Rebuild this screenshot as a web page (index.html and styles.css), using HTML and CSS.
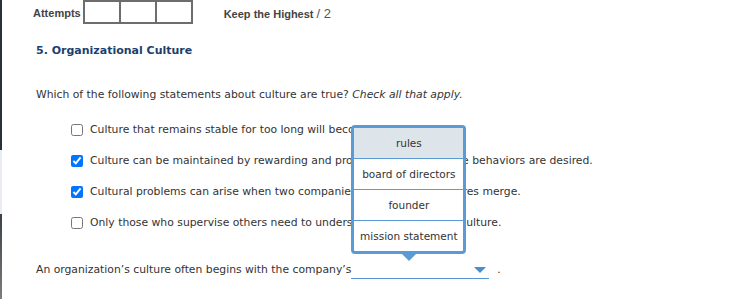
FILE: index.html
```html
<!DOCTYPE html>
<html lang="en">
<head>
    <meta charset="UTF-8">
    <meta name="viewport" content="width=device-width, initial-scale=1.0">
    <title>Organizational Culture</title>
    <link rel="stylesheet" href="styles.css">
</head>
<body>
    <div class="frame">
        <div class="edge"></div>
        <main class="content">
            <div class="attempts">
                <span class="attempts-label">Attempts</span>
                <div class="boxes">
                    <span></span><span></span><span></span>
                </div>
                <span class="keep">Keep the Highest <span class="total">/ 2</span></span>
            </div>

            <h2>5. Organizational Culture</h2>

            <p class="prompt">Which of the following statements about culture are true? <em>Check all that apply.</em></p>

            <ul class="choices">
                <li><input type="checkbox" id="c1"><label for="c1">Culture that remains stable for too long will become rigid.</label></li>
                <li><input type="checkbox" id="c2" checked><label for="c2">Culture can be maintained by rewarding and promoting people whose behaviors are desired.</label></li>
                <li><input type="checkbox" id="c3" checked><label for="c3">Cultural problems can arise when two companies with different cultures merge.</label></li>
                <li><input type="checkbox" id="c4"><label for="c4">Only those who supervise others need to understand the workplace culture.</label></li>
            </ul>

            <p class="fill">An organization’s culture often begins with the company’s
                <span class="select">
                    <span class="arrow"></span>
                    <span class="menu">
                        <span class="option active">rules</span>
                        <span class="option">board of directors</span>
                        <span class="option">founder</span>
                        <span class="option">mission statement</span>
                    </span>
                </span>
                <span class="dot">.</span>
            </p>
        </main>
    </div>
</body>
</html>
```

FILE: styles.css
```css
body {
    margin: 0;
    background: #ffffff;
    font-family: "DejaVu Sans", Verdana, sans-serif;
    color: #333333;
}
.frame {
    display: flex;
    height: 299px;
    overflow: hidden;
}
.edge {
    width: 2px;
    flex-shrink: 0;
    background: linear-gradient(180deg, #263238 0, #263238 150px, #e9edf2 150px, #e9edf2 214px, #3b4045 214px, #7b7e80 299px);
}
.content {
    flex: 1;
    padding-left: 34px;
}
.attempts {
    display: flex;
    align-items: center;
    height: 26px;
    margin-left: -3px;
    font-family: "Liberation Sans", Arial, sans-serif;
}
.attempts-label {
    font-size: 11px;
    font-weight: bold;
    color: #444;
    margin-right: 2px;
}
.boxes {
    display: flex;
    margin-top: -2px;
}
.boxes span {
    width: 34px;
    height: 20px;
    border: 2px solid #6d6d6d;
    margin-right: -2px;
}
.keep {
    margin-left: 33px;
    font-size: 11px;
    font-weight: bold;
    color: #444;
}
.total {
    font-weight: normal;
    font-size: 13px;
    color: #555;
}
h2 {
    margin: 18px 0 0;
    font-size: 11px;
    font-weight: bold;
    color: #1d3f6e;
}
.prompt {
    margin: 31px 0 0;
    font-size: 10.8px;
}
.choices {
    list-style: none;
    margin: 13px 0 0;
    padding: 0 0 0 34px;
}
.choices li {
    display: flex;
    align-items: center;
    height: 31px;
    font-size: 10.8px;
    white-space: nowrap;
}
.choices input {
    margin: 0 7px 0 1px;
    width: 12px;
    height: 12px;
}
.fill {
    margin: 22px 0 0;
    font-size: 10.8px;
    display: flex;
    align-items: center;
}
.select {
    position: relative;
    display: inline-block;
    width: 138px;
    height: 18px;
    margin-left: 0;
    border-bottom: 1px solid #5a95cf;
}
.arrow {
    position: absolute;
    right: 3px;
    top: 7px;
    border-left: 6px solid transparent;
    border-right: 6px solid transparent;
    border-top: 6px solid #4a8ccc;
}
.dot {
    margin-left: 8px;
}
.menu {
    position: absolute;
    left: 0;
    bottom: 24px;
    width: 109px;
    display: flex;
    flex-direction: column;
    background: #fff;
    border: 3px solid #5b9bd5;
    border-radius: 4px;
}
.menu::after {
    content: "";
    position: absolute;
    left: 50%;
    bottom: -10px;
    margin-left: -7px;
    border-left: 7px solid transparent;
    border-right: 7px solid transparent;
    border-top: 7px solid #5b9bd5;
}
.option {
    height: 30px;
    line-height: 30px;
    text-align: center;
    font-size: 10.5px;
    border-top: 1px solid #5b9bd5;
}
.option:first-child {
    border-top: none;
}
.option.active {
    background: #dde5ea;
}
```
